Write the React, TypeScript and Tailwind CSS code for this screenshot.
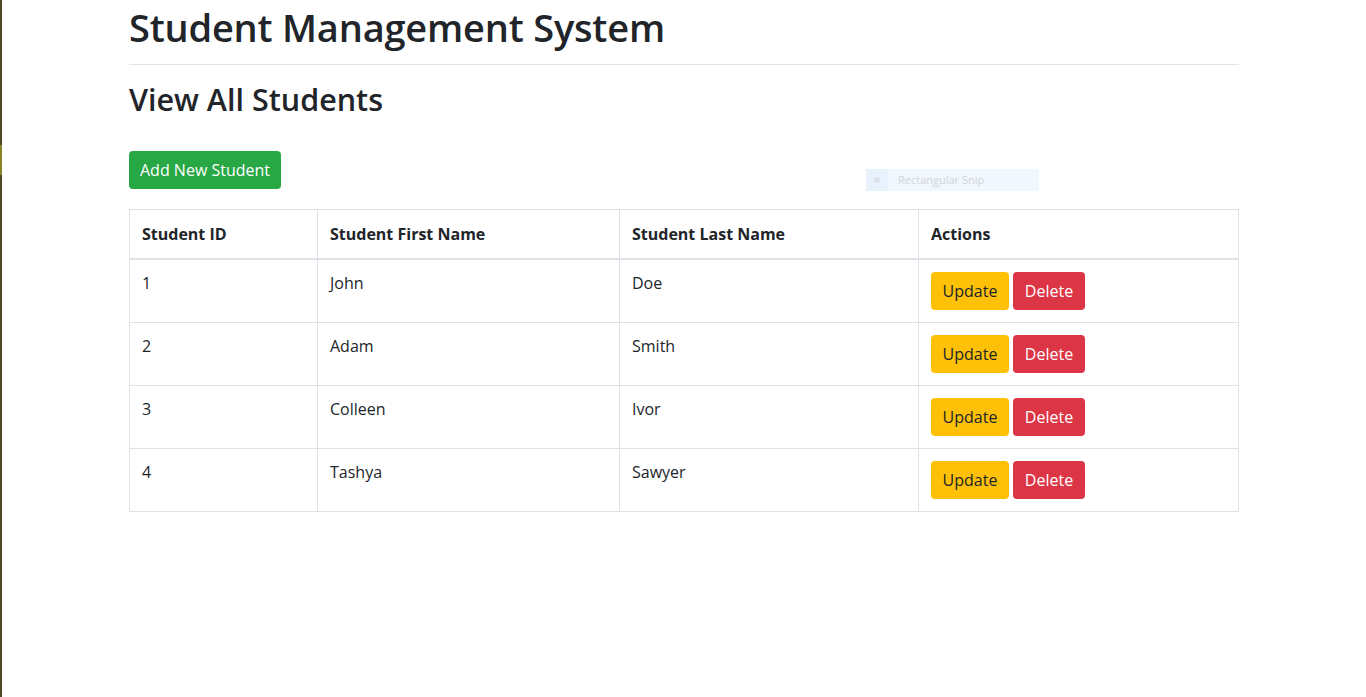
import React from 'react';

const students = [
  { id: 1, first: 'John', last: 'Doe' },
  { id: 2, first: 'Adam', last: 'Smith' },
  { id: 3, first: 'Colleen', last: 'Ivor' },
  { id: 4, first: 'Tashya', last: 'Sawyer' },
];

export default function App() {
  return (
    <div className="relative min-h-[697px] bg-white text-[#212529] font-['Open_Sans',sans-serif]">
      {/* left window edge */}
      <div className="absolute left-0 top-0 h-full w-[2px] bg-[#4f4b26]">
        <div className="mt-[145px] h-[30px] w-full bg-[#8a8428]" />
      </div>

      {/* snipping tool hint */}
      <div className="absolute left-[866px] top-[169px] flex h-[22px] w-[173px] items-center bg-[#f0f7fe] text-[11px] text-[#d2d5d9]">
        <span className="flex h-full w-[22px] items-center justify-center bg-[#e8f2fc]">
          <span className="h-[6px] w-[6px] rounded-full bg-[#dde2e8]" />
        </span>
        <span className="ml-[10px]">Rectangular Snip</span>
      </div>

      <div className="ml-[129px] w-[1110px]">
        <h1 className="text-[38px] font-semibold leading-[54px] tracking-[-0.2px]">Student Management System</h1>
        <hr className="mt-[10px] border-t border-[#e3e3e3]" />
        <h2 className="mt-[15px] text-[30.5px] font-semibold leading-[38px]">View All Students</h2>

        <button className="mt-[33px] h-[38px] rounded bg-[#28a745] px-[11px] text-base text-white">
          Add New Student
        </button>

        <table className="mt-[20px] w-full border-collapse border border-[#dee2e6] text-base">
          <thead>
            <tr className="h-[49px] border-b-2 border-[#dee2e6] text-left">
              <th className="w-[188px] border border-[#dee2e6] px-3 font-bold">Student ID</th>
              <th className="w-[302px] border border-[#dee2e6] px-3 font-bold">Student First Name</th>
              <th className="w-[299px] border border-[#dee2e6] px-3 font-bold">Student Last Name</th>
              <th className="border border-[#dee2e6] px-3 font-bold">Actions</th>
            </tr>
          </thead>
          <tbody>
            {students.map((s) => (
              <tr key={s.id}>
                <td className="border border-[#dee2e6] p-3 align-top leading-[23px]">{s.id}</td>
                <td className="border border-[#dee2e6] p-3 align-top leading-[23px]">{s.first}</td>
                <td className="border border-[#dee2e6] p-3 align-top leading-[23px]">{s.last}</td>
                <td className="border border-[#dee2e6] p-3 align-top">
                  <div className="flex gap-1">
                    <button className="h-[38px] w-[78px] rounded bg-[#ffc107] text-[#212529]">Update</button>
                    <button className="h-[38px] w-[72px] rounded bg-[#dc3545] text-white">Delete</button>
                  </div>
                </td>
              </tr>
            ))}
          </tbody>
        </table>
      </div>
    </div>
  );
}
